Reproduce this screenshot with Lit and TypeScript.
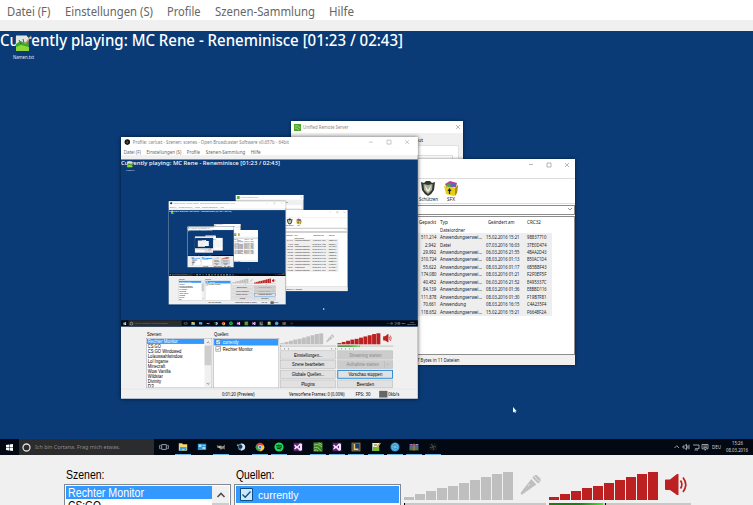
import { LitElement, html, svg, css, nothing } from "lit";
import { customElement, property } from "lit/decorators.js";

// One line of text set to a known width.
const t = (s: string, w: number, size: number, cls = "") => html`<svg
  class="t ${cls}" width=${w} height=${size * 1.25}><text y=${size} font-size=${size}
  textLength=${w} lengthAdjust="spacingAndGlyphs">${s}</text></svg>`;

const shared = css`
  * { box-sizing: border-box; }
  svg { display: block; flex: none; overflow: visible; }
  .t { fill: currentColor; white-space: pre; }
`;

const HEIGHTS = [3, 6, 9, 12, 14, 17, 20, 23, 26, 28];
const SCENES: [string, number][] = [
  ["Rechter Monitor", 76], ["CS:GO", 33], ["CS:GO Windowed", 85], ["Lolauswahlwindow", 88],
  ["Lol Ingame", 52], ["Minecraft", 44], ["Wow Vanilla", 58], ["Wildstar", 38],
  ["Divinity", 34], ["D3", 15],
];
const FILES = [
  ["511.214", "Anwendungserwei...", "15.02.2016 15:21", "98837710"],
  ["2.942", "Datei", "07.03.2016 16:03", "37E0D474"],
  ["29.992", "Anwendungserwei...", "06.03.2016 21:55", "4BAA2D43"],
  ["310.724", "Anwendungserwei...", "08.03.2016 01:13", "B50AC1D4"],
  ["55.622", "Anwendungserwei...", "08.03.2016 01:17", "6B5BBF43"],
  ["174.080", "Anwendungserwei...", "08.03.2016 01:21", "F2F0EF5F"],
  ["40.452", "Anwendungserwei...", "06.03.2016 21:52", "E495337C"],
  ["84.139", "Anwendungserwei...", "08.03.2016 01:36", "E8BBD116"],
  ["111.878", "Anwendungserwei...", "08.03.2016 01:30", "F19B7F81"],
  ["70.661", "Anwendung", "08.03.2016 16:15", "C4A235F4"],
  ["118.652", "Anwendungserwei...", "15.02.2016 15:21", "F6648F2A"],
];

const vs = svg`<path d="M1 3.2 2 2.6 4 4.3 7 1.2 9 2V8L7 9 4 5.9 2 7.5 1 6.9 2.4 5.1Z M7 3.5 5.3 5.1 7 6.6Z" fill="#f3e6fa" fill-rule="evenodd"/>`;
const TASKS: { open: boolean; icon: unknown }[] = [
  { open: false, icon: svg`<path d="M2.7 2.6H7.3V7.4H2.7Z M1.6 3.4H.7V6.6H1.6M8.4 3.4H9.3V6.6H8.4" fill="none" stroke="#b9c0c8" stroke-width=".8"/>` },
  { open: true, icon: svg`<path d="M.8 1.3H4L5 2.2H9.2V8.8H.8Z" fill="#f6d470"/><path d="M2 5H8.5V9H6.5V7.3H4V9H2Z" fill="#3fa5e0"/>` },
  { open: false, icon: svg`<path d="M.8 1.7H9.2V8H.8Z" fill="#2c96d8"/><path d="M1.7 2.6H4.4V5H1.7Z M5.4 3H8.3V3.8H5.4Z M5.4 5H8.3V7H5.4Z" fill="#a8dcf7"/>` },
  { open: true, icon: svg`<path d="M.7 3 2.5 4 4 3.6 7 4.2 9 2.5 8.6 6 9 7.6 7 6.6 5 7.7 3 6 1.3 5.7Z" fill="#8c877f"/><path d="M2.7 4.5H4.5V5.5H2.7Z" fill="#f0f0f0"/>` },
  { open: false, icon: svg`<circle cx="5.6" cy="5" r="3.6" fill="#6b8fb5"/><path d="M5.5 1.5A3.5 3.5 0 0 1 8.5 7L5 8.8Z" fill="#d8e4ef"/><circle cx="4.5" cy="4.8" r="2" fill="#18324e"/><circle cx="1.8" cy="3.3" r="1" fill="#65b878"/>` },
  { open: true, icon: svg`<circle cx="5" cy="5" r="4.3" fill="#e34133"/><path d="M1.2 3A4.3 4.3 0 0 0 4.6 9.3L7 5.7 5 5Z" fill="#36a852"/><path d="M9 3.4A4.3 4.3 0 0 1 4.6 9.3L7 5 6.5 3.4Z" fill="#fccb2f"/><circle cx="5" cy="5" r="2" fill="#fff"/><circle cx="5" cy="5" r="1.5" fill="#397fe3"/>` },
  { open: true, icon: svg`<circle cx="5" cy="5" r="4.6" fill="#1ed760"/><path d="M2.2 3.6Q5 2.6 8 4.1M2.6 5.2Q5 4.4 7.5 5.6M3 6.7Q5 6.1 6.9 7" fill="none" stroke="#07240f" stroke-width=".9"/>` },
  { open: false, icon: svg`<path d="M.6.8H9.4V9.2H.6Z" fill="#5e2078"/>${vs}` },
  { open: true, icon: svg`<path d="M.4.4H9.6V9.6H.4Z" fill="#3c8024"/><path d="M1 3.2Q4 .8 9 5M1 6Q4 3.5 8 8.8M1 8.6Q3.5 6.5 5 9.2M5.5 1Q8.5 1.5 9 3" fill="none" stroke="#a5d680" stroke-width=".9"/>` },
  { open: true, icon: svg`<path d="M.6.8H9.4V9.2H.6Z" fill="#5e2078"/>${vs}` },
  { open: true, icon: svg`<path d="M.6.7H9.4V9.3H.6Z" fill="#b28736"/><path d="M1.4 1.5H8.6V8.5H1.4Z" fill="#1a3c74"/><path d="M3.4 2V7.3H7.4" fill="none" stroke="#f0c85e" stroke-width="1.5"/>` },
  { open: true, icon: svg`<path d="M1.3 1H8V9H1.3Z" fill="#e9edcf"/><path d="M2 5H8.3V9H2Z" fill="#76bb28"/><path d="M9.3 1 6 5.6" stroke="#de9b38" stroke-width="1.3"/><path d="M3 3H6" stroke="#56893b"/>` },
  { open: true, icon: svg`<circle cx="5" cy="5" r="4.6" fill="#2388c0"/><path d="M5 2V8M2.2 4.2 7.8 5.9M2.5 6.8 7.6 3M5 1.2 8 3.4 7.8 6.7 5 8.6 2.2 6.8 2 3.4Z" fill="none" stroke="#a5d8f0" stroke-width=".6"/>` },
  { open: true, icon: svg`<path d="M.5 2H9.5V4H.5Z" fill="#863c7c"/><path d="M.5 4H9.5V6H.5Z" fill="#416ea8"/><path d="M.5 6H9.5V8.4H.5Z" fill="#53764b"/><path d="M4.2 1.7H5.8V8.6H4.2Z" fill="#a86f48"/><path d="M1.5 2.6H3M7 2.6H9" stroke="#e5aab0" stroke-width=".7"/>` },
  { open: true, icon: svg`<circle cx="5" cy="5" r="4" fill="#111315"/><path d="M3 2.5Q5 3 5 5Q3 6.5 2 5.4M5 5Q6.8 3.4 8 5M5 5Q6.5 6.7 5 8" fill="none" stroke="#4d5054" stroke-width="1"/>` },
];

const notepad = svg`<path d="M1 .5H12L13 4V14L1 15Z" fill="#dfe6e4"/><path d="M1 9 4 7 6 6 9 8 13 6 14 15 1 16Z" fill="#38aa25"/><path d="M1 12 6 10 14 12V16H1Z" fill="#8ed63b"/><path d="M16 1 10 9" stroke="#c9a15e" stroke-width="1.2"/><path d="M4 5 6 9M8 4 9 8" stroke="#52602d"/>`;

@customElement("desktop-view")
class DesktopView extends LitElement {
  @property({ type: Number }) depth = 0;
  static styles = [shared, css`
    :host { display: block; position: relative; width: 753px; height: 424px; overflow: hidden;
      background: #0a3b76; font-family: "Noto Sans", sans-serif; }
    .playing { position: absolute; left: 0; top: 0; color: #fff; font-weight: 500; }
    .file { position: absolute; left: 12px; top: 4px; width: 22px; display: flex; flex-direction: column;
      align-items: center; color: #e2ebf5; gap: 2px; }
    .win { position: absolute; background: #f0f0f0; box-shadow: 0 0 3px rgba(0,0,0,.55); overflow: hidden; }
    .remote { left: 291px; top: 90px; width: 172px; height: 130px; }
    .bar { display: flex; align-items: center; background: #fff; height: 12px; padding: 0 3px; gap: 2px; color: #888; }
    .bar .x { margin-left: auto; }
    .tabs { display: flex; justify-content: flex-end; height: 12px; padding: 4px 40px 0 0; color: #222; }
    .page { margin: 0 4px; height: 90px; background: #fff; border: 1px solid #e2e2e2; padding: 9px 5px; }
    .group { border: 1px solid #dedede; height: 60px; }
    .rar { left: 300px; top: 128px; width: 275px; height: 206px; background: #fff; }
    .caption { display: flex; justify-content: flex-end; gap: 10.5px; padding: 3px 6px 0 0; height: 19px; color: #888; }
    .tools { border-top: 1px solid #ddd; border-bottom: 1px solid #ddd; height: 26px; padding: 1.5px 0 0 118px;
      display: flex; gap: 3px; color: #222; }
    .tool { width: 20px; display: flex; flex-direction: column; align-items: center; }
    .path { display: flex; justify-content: flex-end; align-items: center; height: 9.5px; margin-top: 1px;
      border: 1px solid #8b8b8b; padding-right: 2px; }
    .list { height: 139px; border: 1px solid #8d8d8d; margin-top: 1.5px; padding-top: 1px; color: #1c1c1c; }
    .row { display: grid; grid-template-columns: 135px 42px 36.5px 34px; column-gap: 4px; height: 7.47px; align-items: center;
      width: 251px; }
    .row > :first-child { justify-self: end; }
    .row.head { height: 8px; grid-template-columns: 135px 43.5px 35.5px 34px; }
    .row.on { background: #eee; }
    .info { display: flex; align-items: center; height: 9.5px; background: #f0f0f0; padding-left: 117px; color: #222; }
    .obs { left: 121px; top: 106.4px; width: 296.8px; height: 261.8px; box-shadow: 0 0 4px rgba(0,0,0,.6); }
    .zoomed { width: 753px; height: 664px; transform: scale(.39416); transform-origin: 0 0; }
    .cursor { position: absolute; left: 512px; top: 376px; }
    .taskbar { position: absolute; left: 0; right: 0; top: 408px; height: 16px; background: #020913;
      display: flex; color: #d5d8dd; }
    .start { width: 19px; display: grid; place-items: center; }
    .cortana { width: 135px; background: #2b2c2e; color: #8b8b8b; display: flex; align-items: center; gap: 4px; padding-left: 3px; }
    .task { width: 19.27px; display: flex; justify-content: center; padding-top: 2.5px; }
    .task.open { background: linear-gradient(#6fb2e4, #6fb2e4) center bottom / 16px 1px no-repeat; }
    .tray { margin-left: auto; display: flex; align-items: center; gap: 2px; padding-right: 5px; }
    .clock { display: flex; flex-direction: column; align-items: center; gap: .5px; margin: -1px 0 0 3px; }
    .deu { margin-left: 1px; }
  `];
  render() {
    return html`
      <div class="playing">${t("Currently playing: MC Rene - Reneminisce [01:23 / 02:43]", 403, 15.3)}</div>
      <div class="file">
        <svg width="16" height="17" viewBox="0 0 16 17">${notepad}</svg>${t("Namen.txt", 21, 5)}
      </div>
      <div class="win remote">
        <div class="bar">
          <svg width="7" height="7" viewBox="0 0 10 10"><path d="M0 0H10V10H0Z" fill="#4fa52c"/><path d="M1 3Q5 1 9 6M1 6Q4 4 7 9" fill="none" stroke="#c5edaa"/></svg>
          ${t("Unified Remote Server", 45.5, 5)}
          <svg class="x" width="4" height="4"><path d="M0 0 4 4M4 0 0 4" stroke="#888" stroke-width=".6"/></svg>
        </div>
        <div class="tabs">${t("About", 14, 5)}</div>
        <div class="page"><div class="group"></div></div>
      </div>
      <div class="win rar">
        <div class="caption"><svg width="43" height="6"><path d="M3 2.5H7M21 1H25V5H21ZM39 1 43 5M43 1 39 5" fill="none" stroke="#888" stroke-width=".6"/></svg></div>
        <div class="tools">
          <div class="tool"><svg width="14" height="15" viewBox="0 0 14 15"><path d="M0 1 3 2 5 0H9L11 2 14 1 13 9Q11 13 7 15Q3 13 1 9Z" fill="#30372f"/><path d="M2.5 3 7 4 11.5 3 11 9 7 13 3 9Z" fill="#a7ae99"/><path d="M4 4 7 9 10 4 9 9 7 11 5 9Z" fill="#f4f1d5"/></svg>${t("Schützen", 19, 4.8)}</div>
          <div class="tool"><svg width="14" height="15" viewBox="0 0 14 15"><path d="M1 3 6 0 13 2 12 6 3 7Z" fill="#b6439a"/><path d="M2 4 6 2 7 6H3Z" fill="#47a951"/><path d="M8 2 12 3 10 6 7 5Z" fill="#4773bd"/><path d="M0 5 11 7 14 4 13 12 10 15 2 13Z" fill="#e6cd17"/><path d="M11 7V15L13 12 14 4Z" fill="#aa8d13"/><path d="M5.5 8V13M4 10 5.5 8 7 10" fill="none" stroke="#222" stroke-width="1.2"/></svg>${t("SFX", 8, 4.8)}</div>
        </div>
        <div class="path"><svg width="4" height="3"><path d="M0 0 2 2 4 0" fill="none" stroke="#555" stroke-width=".6"/></svg></div>
        <div class="list">
          <div class="row head">${t("Gepackt", 17, 5)}${t("Typ", 8, 5)}${t("Geändert am", 26.5, 5)}${t("CRC32", 14, 5)}</div>
          <div class="row"><span></span>${t("Dateiordner", 25, 5)}</div>
          ${FILES.map(([size, kind, date, crc]) => html`<div class="row on">
            ${t(size, size.length * 2.2, 5)}${t(kind, kind.length > 12 ? 42 : kind.length > 6 ? 26 : 11, 5)}${t(date, 33.5, 5)}${t(crc, 19.5, 5)}</div>`)}
        </div>
        <div class="info">${t("7 Bytes in 11 Dateien", 42.5, 5)}</div>
      </div>
      <div class="win obs">${this.depth > 0
        ? html`<obs-window class="zoomed" .depth=${this.depth - 1}></obs-window>` : nothing}</div>
      <svg class="cursor" width="5" height="7"><path d="M1 0V5.5L2.2 4.6 3 6 3.8 5.6 3.3 4.2H4.8Z" fill="#fff"/></svg>
      <div class="taskbar">
        <div class="start"><svg width="7" height="7"><path d="M0 1 3 .5V3.2H0ZM3.5.4 7 0V3.2H3.5ZM0 3.7H3V6.5L0 6ZM3.5 3.7H7V7L3.5 6.6Z" fill="#fff"/></svg></div>
        <div class="cortana"><svg width="9" height="9"><circle cx="4.5" cy="4.5" r="3.5" fill="none" stroke="#ddd" stroke-width="1.3"/></svg>${t("Ich bin Cortana. Frag mich etwas.", 85, 6)}</div>
        ${TASKS.map((k) => html`<div class="task ${k.open ? "open" : ""}"><svg width="10" height="10" viewBox="0 0 10 10">${k.icon}</svg></div>`)}
        <div class="tray">
          <svg width="35" height="8" fill="none" stroke="#d5d8dd" stroke-width=".7"><path d="M.5 5 2.8 2.7 5 5M9 3H10.5L12.5 1.3V6.7L10.5 5H9ZM13.8 2.5V5.5M15 1.7V6.3M19 2H25V5.7H21M20.5 7H24M28 1.5H34V5.8H31.8L31 7.3V5.8H28ZM29.3 3H33M29.3 4.4H33"/></svg>
          <span class="deu">${t("DEU", 9, 4.8)}</span>
          <div class="clock">${t("15:26", 11, 4.8)}${t("08.03.2016", 22, 4.8)}</div>
        </div>
      </div>`;
  }
}

@customElement("obs-window")
class ObsWindow extends LitElement {
  @property({ type: Number }) depth = 0;
  @property({ type: Boolean }) untitled = false;
  static styles = [shared, css`
    :host { display: flex; flex-direction: column; width: 753px; background: #f0f0f0;
      font-family: "Noto Sans", sans-serif; color: #000; }
    .title { height: 26px; background: #fff; display: flex; align-items: center; padding: 0 20px 0 9px; gap: 7px; color: #808080; }
    .title .btns { margin-left: auto; }
    .menu { height: 20px; background: #fff; color: #666; display: flex; padding: 4px 0 0 7px; gap: 14.3px; }
    .gap { height: 11px; }
    .panel { display: flex; gap: 3px; height: 158px; padding-left: 64px; font-family: "Liberation Sans", sans-serif; }
    .col { width: 167px; padding-top: 11.5px; }
    .col > .t { margin: 0 0 2.5px 1.5px; }
    .box { height: 127px; border: 1px solid #828790; background: #fff; padding: 1px; overflow: hidden; display: flex; }
    .items { flex: 1; overflow: hidden; }
    .item { height: 12.8px; padding-left: 2px; display: flex; align-items: center; }
    .on { background: #3399ff; color: #fff; }
    .scroll { width: 17px; display: flex; flex-direction: column; align-items: center;
      justify-content: space-between; padding: 6px 0; background: linear-gradient(#cdcdcd, #cdcdcd) 0 17px / 17px 50px no-repeat #f0f0f0; }
    .source { height: 17px; display: flex; align-items: center; gap: 4.5px; padding-left: 4px; }
    .audio { width: 142px; padding-top: 17px; }
    .level { display: flex; align-items: flex-end; gap: 1px; height: 28px; }
    .level i { width: 10px; background: #bfbfbf; }
    .level.red i { background: #bd2020; }
    .level svg { margin: 1.5px 0 0 6px; align-self: flex-start; }
    .meter { height: 3px; margin: 3px 0 4px; background: #c8c8c8; display: flex; }
    .green { width: 54px; background: linear-gradient(90deg, #197d19 55%, #42e636); margin-right: 2px; }
    .peak { width: 1px; background: #000; }
    .ticks { background: repeating-linear-gradient(90deg, #999 0 1px, transparent 1px 10px); height: 3px; margin-bottom: 3px; }
    .btn { height: 21.5px; margin-bottom: 3px; background: #e1e1e1; border: 1px solid #adadad; width: 141px; display: flex;
      align-items: center; justify-content: center; }
    .off { background: #ccc; border-color: #bfbfbf; color: #888; }
    .focus { border: 2px solid #0078d7; }
    .drop { border-left: 1px solid #aaa; padding: 6px 4px; margin: 0 -17px 0 14px; }
    .status { height: 25px; border-top: 1px solid #d7d7d7; display: grid; align-items: center; padding-left: 256px;
      grid-template-columns: 170px 169px 60px 23px 40px; }
    .rate { width: 21px; height: 17px; background: #666; }
  `];
  render() {
    const check = (on: boolean) => html`<svg width="13" height="13"><path d="M.5.5H12.5V12.5H.5Z" fill=${on ? "#cfe7fb" : "#fff"} stroke=${on ? "#0a4e8c" : "#333"}/><path d="M2.5 6.5 5.2 9.2 10.5 3.5" fill="none" stroke=${on ? "#0a4e8c" : "#333"} stroke-width="1.3"/></svg>`;
    return html`
      ${this.untitled ? nothing : html`<div class="title">
        <svg width="14" height="14"><circle cx="7" cy="7" r="7" fill="#111"/><path d="M4 4Q8 3 7 7Q5 10 3 8M7 7Q10 4 11 8M7 7Q9 11 6 11" fill="none" stroke="#999"/></svg>
        ${t("Profile: carlust - Szenen: scenes - Open Broadcaster Software v0.657b - 64bit", 396, 12)}
        <svg class="btns" width="104" height="12" fill="none" stroke="#777"><path d="M0 6H10M46 1H56V11H46ZM92 1 102 11M102 1 92 11"/></svg>
      </div>`}
      <div class="menu">${t("Datei (F)", 43.5, 12)}${t("Einstellungen (S)", 88, 12)}${t("Profile", 33.5, 12)}${t("Szenen-Sammlung", 100, 12)}${t("Hilfe", 25, 12)}</div>
      <div class="gap"></div>
      <desktop-view .depth=${this.depth}></desktop-view>
      <div class="panel">
        <div class="col">
          ${t("Szenen:", 38.5, 12)}
          <div class="box">
            <div class="items">${SCENES.map(([s, w], i) => html`<div class="item ${i === 0 ? "on" : ""}">${t(s, w, 12)}</div>`)}</div>
            <div class="scroll">
              <svg width="8" height="6" fill="none" stroke="#505050" stroke-width="1.6"><path d="M.5 5 4 1.5 7.5 5"/></svg>
              <svg width="8" height="6" fill="none" stroke="#505050" stroke-width="1.6"><path d="M.5 1 4 4.5 7.5 1"/></svg>
            </div>
          </div>
        </div>
        <div class="col">
          ${t("Quellen:", 38.5, 12)}
          <div class="box"><div class="items">
            <div class="source on">${check(true)}${t("currently", 40.5, 11.7)}</div>
            <div class="source">${check(false)}${t("Rechter Monitor", 76, 11.7)}</div>
          </div></div>
        </div>
        <div class="audio">
          <div class="level">${HEIGHTS.map((h) => html`<i style="height:${h}px"></i>`)}
            <svg width="22" height="22"><path d="M11.3 5 16.3 10.5 4 19.3Q1.5 21.5 .8 20Q.2 19.3 1.8 17.2Z" fill="#bfbfbf"/><path d="M12.3 3.8 18 9.5Q21.5 8 20.3 4.6L17 1.2Q13.7.5 12.3 3.8Z" fill="#bfbfbf"/><path d="M13.5 1.8 19.8 8" stroke="#ececec" stroke-width=".8"/><path d="M8 11.8 9.5 10.2" stroke="#eee"/></svg>
          </div>
          <div class="meter"><span class="peak"></span></div>
          <div class="ticks"></div>
          <div class="btn">${t("Einstellungen...", 72, 11.5)}</div>
          <div class="btn">${t("Szene bearbeiten", 82, 11.5)}</div>
          <div class="btn">${t("Globale Quellen...", 83, 11.5)}</div>
          <div class="btn">${t("Plugins", 35, 11.5)}</div>
        </div>
        <div class="audio">
          <div class="level red">${HEIGHTS.map((h) => html`<i style="height:${h}px"></i>`)}
            <svg width="23" height="22"><path d="M1 5.5H5L12 0H13.5V21H12L5 16H1Q0 16 0 15V6.5Q0 5.5 1 5.5Z" fill="#bd2020"/><path d="M15.5 6.5Q18.3 10.5 15.5 14.5M18 3.5Q23.5 10.5 18 18" fill="none" stroke="#bd2020" stroke-width="1.7"/></svg>
          </div>
          <div class="meter"><span class="green"></span><span class="peak"></span></div>
          <div class="ticks"></div>
          <div class="btn off">${t("Streaming starten", 82, 11.5)}</div>
          <div class="btn off">${t("Aufnahme starten", 82, 11.5)}<span class="drop"><svg width="7" height="5"><path d="M0 0 3.5 4 7 0" fill="none" stroke="#999"/></svg></span></div>
          <div class="btn focus">${t("Vorschau stoppen", 86, 11.5)}</div>
          <div class="btn">${t("Beenden", 44, 11.5)}</div>
        </div>
      </div>
      <div class="status">${t("0:01:20 (Preview)", 83, 11.5)}${t("Verworfene Frames: 0 (0,00%)", 141, 11.5)}${t("FPS: 30", 38, 11.5)}<span class="rate"></span>${t("0kb/s", 28, 11.5)}</div>`;
  }
}

@customElement("app-root")
class AppRoot extends LitElement {
  static styles = css`
    :host { display: block; width: 753px; height: 505px; overflow: hidden; }
  `;
  render() {
    return html`<obs-window untitled .depth=${4}></obs-window>`;
  }
}
